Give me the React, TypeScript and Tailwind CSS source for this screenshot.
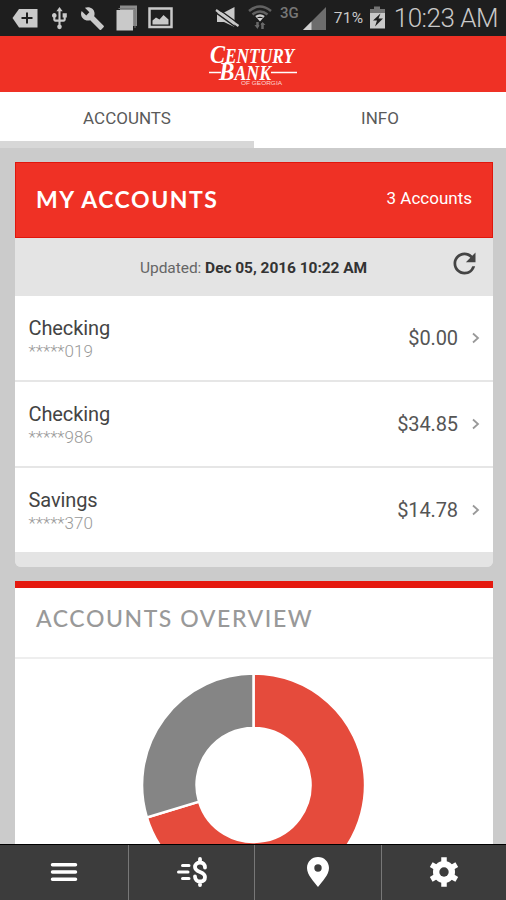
import React from 'react';
import { MdBuild, MdRefresh, MdUsb } from 'react-icons/md';

interface Account {
  name: string;
  mask: string;
  balance: string;
}

const accounts: Account[] = [
  { name: 'Checking', mask: '*****019', balance: '$0.00' },
  { name: 'Checking', mask: '*****986', balance: '$34.85' },
  { name: 'Savings', mask: '*****370', balance: '$14.78' },
];

const StatusBar: React.FC = () => (
  <div className="flex h-9 shrink-0 items-center bg-[#1e1e1e] text-[#c9c9c9]">
    <svg className="ml-3 h-9 w-[26px]" viewBox="12 0 26 36">
      <path d="M12.500 18 19 9h18.500v18.500H19z" fill="currentColor" />
      <path d="M27 12.500v11M21.500 18h11" stroke="#1e1e1e" strokeWidth="2" />
    </svg>
    <MdUsb className="ml-[9px] h-[27px] w-[25px]" />
    <MdBuild className="ml-2 h-[25px] w-[25px]" />
    <svg className="ml-[11px] h-9 w-[22px]" viewBox="116 0 22 36">
      <path d="M120 5.500h17V26h-17z" fill="#8c8c8c" />
      <path d="M118.500 8.500H135V28" fill="none" stroke="#777" />
      <path d="M116.500 10H133v20.500h-16.500z" fill="currentColor" />
    </svg>
    <svg className="ml-[10px] h-9 w-[25px]" viewBox="148 0 25 36">
      <rect x="149.500" y="8.500" width="22" height="18.500" fill="none" stroke="currentColor" strokeWidth="2.500" />
      <path d="M152.500 24.500v-4l3.500-3 3.500 2 4-4.500 5 4.500v5z" fill="currentColor" />
    </svg>

    <svg className="ml-[42px] h-9 w-[25px]" viewBox="215 0 25 36">
      <path d="M217 12.500h7L234.500 7v20L224 22h-7z" fill="currentColor" />
      <path d="M215 12 237 28" stroke="#1e1e1e" strokeWidth="1.500" />
      <path d="M217 8 239 24" stroke="#1e1e1e" strokeWidth="1.500" />
      <path d="M216 10 238.500 26" stroke="currentColor" strokeWidth="2.200" />
    </svg>
    <svg className="ml-2 h-9 w-[24px]" viewBox="248 0 24 36" fill="none" strokeWidth="2.500">
      <path d="M249 11q11-9 22 0M252.500 14.500q7.500-6 15 0" stroke="#626262" />
      <path d="M256 17q4-3 8 0" stroke="#c9c9c9" />
      <path d="m257 18 3 3.500 3-3.500z" fill="#d5d5d5" />
      <path d="M257.500 22v5M262.500 23v6" stroke="#696969" strokeWidth="2.500" />
      <path d="m254.500 25 3 4 2-4zM260.500 25l2-3 3 3z" fill="#696969" />
    </svg>
    <span className="-mt-[10px] ml-2 text-[15px] font-medium leading-5 text-[#777]">3G</span>
    <svg className="ml-[4px] h-9 w-6" viewBox="303 0 24 36">
      <path d="M326 7v23h-23z" fill="#6d6d6d" />
      <path d="M311.500 21.500v8.500H303z" fill="#d0d0d0" />
    </svg>
    <span className="ml-[7px] mt-px w-[32px] text-[15.500px] tracking-[0.3px]">71%</span>
    <svg className="ml-[2px] h-9 w-[18px]" viewBox="368 0 18 36">
      <path d="M370 9h4V6.500h6V9h5v5h-15z" fill="#747474" />
      <path d="M370 13h15v15.500h-15z" fill="currentColor" />
      <path d="m380.500 13.500-7.500 7h4l-2 6 8-8h-4.500z" fill="#1e1e1e" />
    </svg>
    <span className="ml-[8px] whitespace-nowrap text-[26px] font-light tracking-[-0.5px]">10:23 AM</span>
  </div>
);

const BankLogo: React.FC = () => (
  <svg
    className="h-14 w-[100px] overflow-visible"
    viewBox="203 36 100 56"
    fill="#fff"
    fontFamily="'Liberation Serif', serif"
    fontWeight="bold"
    fontStyle="italic"
  >
    <text x="210" y="62.500" fontSize="20" textLength="84" lengthAdjust="spacingAndGlyphs">
      <tspan fontSize="26">C</tspan>ENTURY
    </text>
    <text x="219" y="80" fontSize="20" textLength="52" lengthAdjust="spacingAndGlyphs">
      <tspan fontSize="26">B</tspan>ANK
    </text>
    <path d="M209 72.500h12M271 72.500h26" stroke="#fff" strokeWidth="1.500" />
    <text
      x="241"
      y="84.500"
      fontSize="5"
      fontFamily="'Liberation Sans', sans-serif"
      fontWeight="normal"
      fontStyle="normal"
      fillOpacity="0.8"
      textLength="41"
      lengthAdjust="spacingAndGlyphs"
    >
      OF GEORGIA
    </text>
  </svg>
);

const Tabs: React.FC = () => (
  <div className="flex h-14 shrink-0 bg-white text-[17px] text-[#5a5a5a]">
    <div className="flex w-[254px] items-center justify-center border-b-[7px] border-[#d7d7d7] pt-1">ACCOUNTS</div>
    <div className="flex flex-1 items-center justify-center border-b-[7px] border-white pt-1">INFO</div>
  </div>
);

const AccountRow: React.FC<{ account: Account }> = ({ account }) => (
  <div className="flex h-[86px] items-center justify-between border-b-2 border-[#e6e6e6] pl-[14px] pr-[13px] last:h-[84px] last:border-b-0">
    <div className="pt-px">
      <div className="text-[20px] leading-6 tracking-[-0.1px] text-[#444]">{account.name}</div>
      <div className="text-[17px] font-light leading-[22px] text-[#999]">{account.mask}</div>
    </div>
    <div className="flex items-center text-[20px] tracking-[-0.1px] text-[#555]">
      {account.balance}
      <svg className="ml-[14px] h-3 w-2" viewBox="0 0 8 12" fill="none" stroke="#999" strokeWidth="1.800">
        <path d="m1 1.500 5 4.500-5 4.500" />
      </svg>
    </div>
  </div>
);

const DonutChart: React.FC = () => (
  <svg className="mx-auto h-[224px] w-[224px] shrink-0" viewBox="-111.500 -112 224 224" stroke="#fff" strokeWidth="2.500">
    <path d="M0-111.500A111.500 111.500 0 1 1-106.600 32.500L-54.500 16.600A57 57 0 1 0 0-57z" fill="#e54b3c" />
    <path d="M0-111.500A111.500 111.500 0 0 0-106.600 32.500L-54.500 16.600A57 57 0 0 1 0-57z" fill="#858585" />
  </svg>
);

const BottomNav: React.FC = () => (
  <nav className="flex h-14 shrink-0 divide-x divide-[#777] border-t border-black bg-[#3c3c3c] text-white">
    <div className="flex w-[129px] items-center justify-center">
      <svg className="-mt-px h-5 w-7" viewBox="0 0 28 20" stroke="currentColor" strokeWidth="3.500" strokeLinecap="round">
        <path d="M2.500 2.800h23M2.500 10h23M2.500 17.200h23" />
      </svg>
    </div>
    <div className="flex w-[126px] items-center justify-center">
      <svg className="-mt-px h-[30px] w-8" viewBox="0 0 32 30" fill="none" stroke="currentColor" strokeWidth="3" strokeLinecap="round">
        <path d="M6.500 8.500H13M2.500 15H12M6.500 21.500H13" />
        <path
          d="M29 10.500c0-3-2-5-5-5s-5 2-5 4.500c0 6 10 4 10 10 0 3-2 4.500-5 4.500s-5-2-5-5M24 2v3.500M24 25v3"
          strokeWidth="3.800"
        />
      </svg>
    </div>
    <div className="flex w-[127px] items-center justify-center">
      <svg className="-mt-px h-[30px] w-6" viewBox="0 0 24 30" fill="currentColor" fillRule="evenodd">
        <path d="M12 0C5.800 0 1 4.800 1 11c0 7 7 13.500 11 19 4-5.500 11-12 11-19 0-6.200-4.800-11-11-11zm0 7.300a3.700 3.700 0 1 1 0 7.400 3.700 3.700 0 0 1 0-7.400z" />
      </svg>
    </div>
    <div className="flex flex-1 items-center justify-center">
      <svg className="-mt-[2px] h-[30px] w-[30px]" viewBox="-15 -15 30 30" fill="currentColor">
        <circle r="11" />
        <path
          d="M0-12v24M-10.400-6 10.400 6M-10.400 6 10.400-6"
          stroke="currentColor"
          strokeWidth="5.500"
          strokeLinecap="square"
          strokeLinejoin="round"
        />
        <circle r="4.700" fill="#3c3c3c" />
      </svg>
    </div>
  </nav>
);

const App: React.FC = () => {
  return (
    <div className="flex h-[900px] w-[506px] flex-col overflow-hidden bg-[#cbcbcb] font-['Roboto',sans-serif]">
      <StatusBar />
      <header className="flex h-14 shrink-0 justify-center bg-[#ef3125]">
        <BankLogo />
      </header>
      <Tabs />

      <main className="flex min-h-0 flex-1 flex-col gap-[14px] overflow-hidden pl-[14.500px] pr-[13px] pt-[14px]">
        {/* My accounts */}
        <section className="shrink-0 overflow-hidden rounded-b-md bg-[#e4e4e4]">
          <div className="flex h-[76px] items-center justify-between border border-[#e0160c] bg-[#ef3125] pb-[2px] pl-[20.500px] pr-5 text-white">
            <h2 className="font-['Lato',sans-serif] text-[23px] font-bold tracking-[1.550px]">MY ACCOUNTS</h2>
            <span className="text-[17px]">3 Accounts</span>
          </div>
          <div className="flex h-[58px] items-center pr-[12px]">
            <p className="ml-[125.500px] flex-1 whitespace-nowrap pt-[3px] text-[15.500px] tracking-[-0.05px] text-[#666]">
              Updated: <b className="font-bold text-[#333]">Dec 05, 2016 10:22 AM</b>
            </p>
            <MdRefresh className="-mt-2 h-[33px] w-[33px] text-[#444]" />
          </div>
          <div className="h-[256px] bg-white">
            {accounts.map((account) => (
              <AccountRow key={account.mask} account={account} />
            ))}
          </div>
          <div className="h-[15px] bg-[#e4e4e4]" />
        </section>

        {/* Accounts overview */}
        <section className="flex h-[420px] shrink-0 flex-col border-t-[7px] border-[#e5190f] bg-white">
          <div className="mb-[14px] flex h-[71px] shrink-0 items-center border-b-2 border-[#eee] pb-2 pl-[21.500px]">
            <h2 className="font-['Lato',sans-serif] text-[23px] font-medium tracking-[1.570px] text-[#999]">
              ACCOUNTS OVERVIEW
            </h2>
          </div>
          <DonutChart />
        </section>
      </main>

      <BottomNav />
    </div>
  );
};

export default App;
